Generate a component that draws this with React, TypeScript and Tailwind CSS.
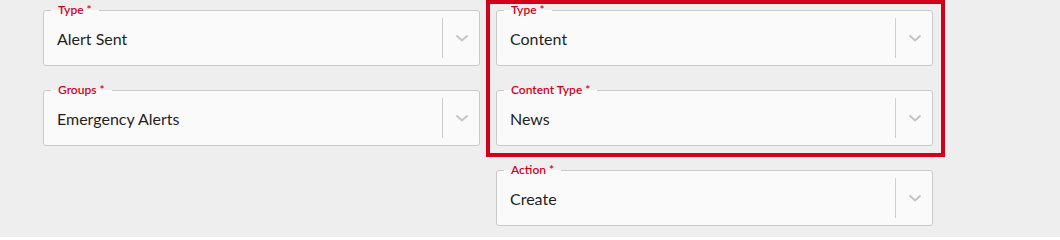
import React from 'react';

const ChevronDown = () => (
  <svg width="14" height="14" viewBox="0 0 14 14" fill="none">
    <path d="M1.5 4.5l5.5 5l5.5-5" stroke="#c4c4c4" strokeWidth="2" />
  </svg>
);

interface SelectFieldProps {
  label: string;
  value: string;
}

const SelectField: React.FC<SelectFieldProps> = ({ label, value }) => (
  <div className="relative flex items-center h-[56px] w-[437px] bg-[#fafafa] border border-[#c9c9c9] rounded-[3px]">
    <span className="absolute -top-[7px] left-[7px] px-[7px] text-[12px] leading-[12px] font-semibold text-[#d0021b] bg-[linear-gradient(to_bottom,#eeeeee_50%,#fafafa_50%)]">
      {label} *
    </span>
    <div className="flex-1 pl-[13px] pt-[2px] text-[16px] text-[#1f1f1f]">{value}</div>
    <div className="w-px h-[40px] bg-[#cfcfcf]" />
    <div className="w-[36px] flex items-center justify-center pl-[1px]">
      <ChevronDown />
    </div>
  </div>
);

export default function App() {
  return (
    <div
      className="w-[1060px] h-[237px] bg-[#eeeeee] flex pl-[43px]"
      style={{ fontFamily: 'Lato, "Open Sans", sans-serif' }}
    >
      {/* Left column */}
      <div className="flex flex-col gap-[24px] pt-[10px]">
        <SelectField label="Type" value="Alert Sent" />
        <SelectField label="Groups" value="Emergency Alerts" />
      </div>

      {/* Right column */}
      <div className="flex flex-col ml-[6px]">
        <div className="flex flex-col gap-[24px] border-4 border-[#d0021b] pt-[6px] pl-[6px] pr-[8px] pb-[7px]">
          <SelectField label="Type" value="Content" />
          <SelectField label="Content Type" value="News" />
        </div>
        <div className="pl-[10px] pt-[13px]">
          <SelectField label="Action" value="Create" />
        </div>
      </div>
    </div>
  );
}
